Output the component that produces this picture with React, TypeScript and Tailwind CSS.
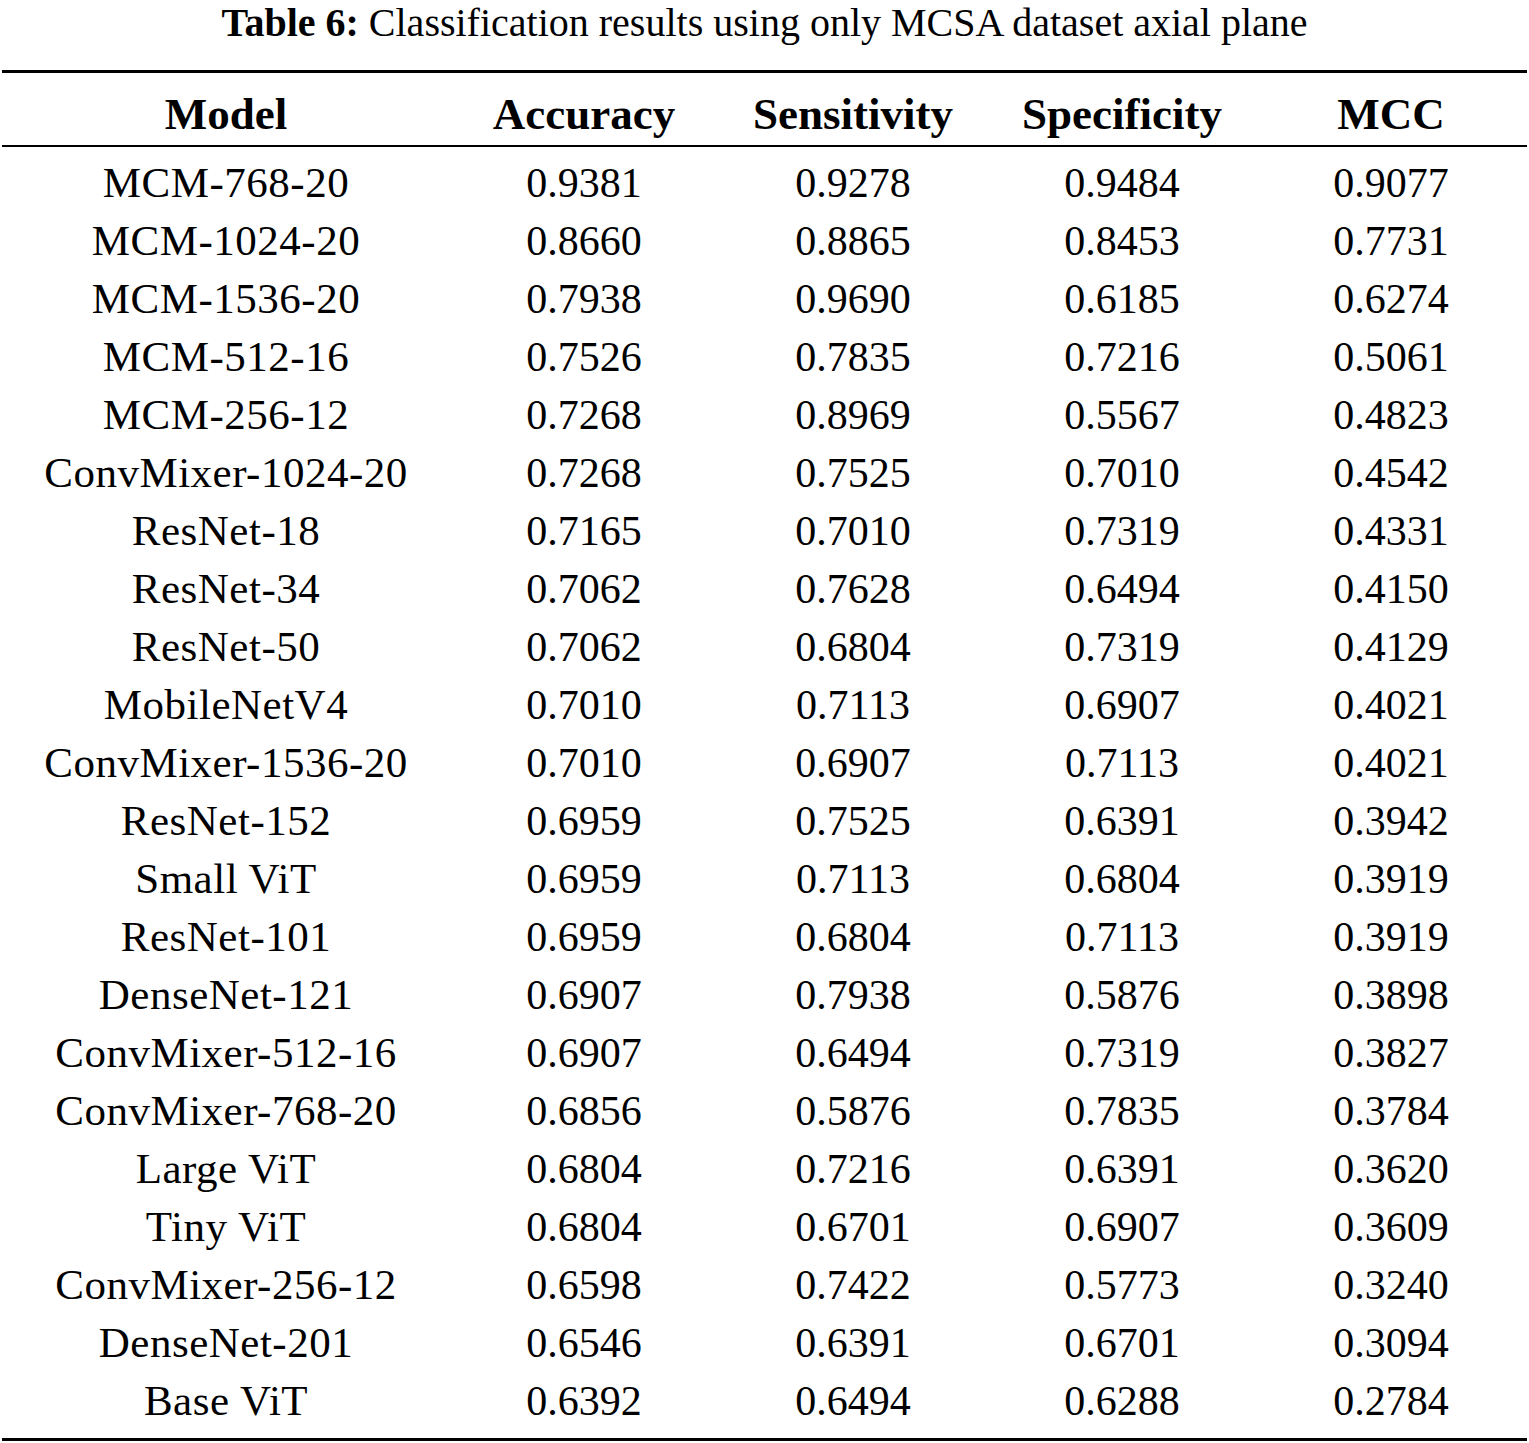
import React from "react";

const rows: [string, string, string, string, string][] = [
  ["MCM-768-20", "0.9381", "0.9278", "0.9484", "0.9077"],
  ["MCM-1024-20", "0.8660", "0.8865", "0.8453", "0.7731"],
  ["MCM-1536-20", "0.7938", "0.9690", "0.6185", "0.6274"],
  ["MCM-512-16", "0.7526", "0.7835", "0.7216", "0.5061"],
  ["MCM-256-12", "0.7268", "0.8969", "0.5567", "0.4823"],
  ["ConvMixer-1024-20", "0.7268", "0.7525", "0.7010", "0.4542"],
  ["ResNet-18", "0.7165", "0.7010", "0.7319", "0.4331"],
  ["ResNet-34", "0.7062", "0.7628", "0.6494", "0.4150"],
  ["ResNet-50", "0.7062", "0.6804", "0.7319", "0.4129"],
  ["MobileNetV4", "0.7010", "0.7113", "0.6907", "0.4021"],
  ["ConvMixer-1536-20", "0.7010", "0.6907", "0.7113", "0.4021"],
  ["ResNet-152", "0.6959", "0.7525", "0.6391", "0.3942"],
  ["Small ViT", "0.6959", "0.7113", "0.6804", "0.3919"],
  ["ResNet-101", "0.6959", "0.6804", "0.7113", "0.3919"],
  ["DenseNet-121", "0.6907", "0.7938", "0.5876", "0.3898"],
  ["ConvMixer-512-16", "0.6907", "0.6494", "0.7319", "0.3827"],
  ["ConvMixer-768-20", "0.6856", "0.5876", "0.7835", "0.3784"],
  ["Large ViT", "0.6804", "0.7216", "0.6391", "0.3620"],
  ["Tiny ViT", "0.6804", "0.6701", "0.6907", "0.3609"],
  ["ConvMixer-256-12", "0.6598", "0.7422", "0.5773", "0.3240"],
  ["DenseNet-201", "0.6546", "0.6391", "0.6701", "0.3094"],
  ["Base ViT", "0.6392", "0.6494", "0.6288", "0.2784"],
];

const headers = ["Model", "Accuracy", "Sensitivity", "Specificity", "MCC"];
const grid = "grid grid-cols-[448px_268px_270px_268px_270px]";

export default function App() {
  return (
    <div
      className="w-[1529px] h-[1443px] bg-white text-black overflow-hidden"
      style={{ fontFamily: '"Liberation Serif", "Times New Roman", serif' }}
    >
      <div className="h-[45px] leading-[45px] text-center text-[40px] whitespace-nowrap">
        <span className="font-bold">Table 6:</span> Classification results using only MCSA dataset axial plane
      </div>
      <div className="mt-[25px] mx-[2px] border-t-[3px] border-black">
        <div className={`${grid} pt-[12px] pb-[2px] border-b-[2px] border-black`}>
          {headers.map((h) => (
            <div key={h} className="text-center font-bold text-[45px] leading-[58px] whitespace-nowrap">
              {h}
            </div>
          ))}
        </div>
        <div className="pt-[7px] pb-[8px] border-b-[3px] border-black">
          {rows.map((r) => (
            <div key={r[0]} className={grid}>
              {r.map((c, i) => (
                <div
                  key={i}
                  className={`text-center leading-[58px] whitespace-nowrap ${i === 0 ? "text-[43px] tracking-[0.5px]" : "text-[42px]"}`}
                >
                  {c}
                </div>
              ))}
            </div>
          ))}
        </div>
      </div>
    </div>
  );
}
